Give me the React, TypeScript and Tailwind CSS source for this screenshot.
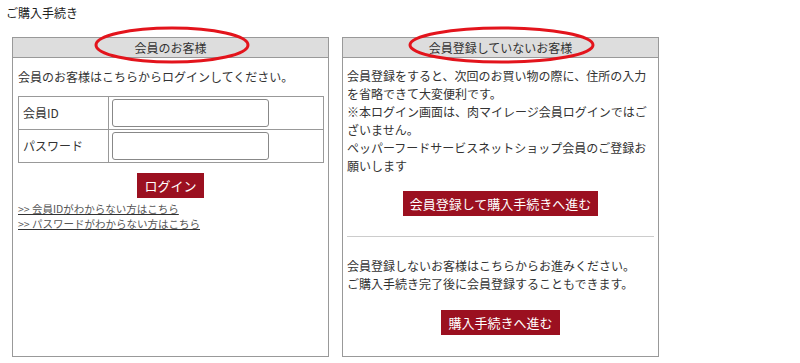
import React from 'react';

const font = { fontFamily: '"Noto Sans CJK JP", "Noto Sans", sans-serif' };

function Box({ title, children }: { title: string; children: React.ReactNode }) {
  return (
    <div className="w-[317px] h-[320px] border border-[#999] bg-white flex flex-col">
      <div className="h-[20px] bg-[#ddd] border-b border-[#999] text-center text-[12px] leading-[19px] text-[#333]">
        {title}
      </div>
      {children}
    </div>
  );
}

function RedButton({ label, w }: { label: string; w: string }) {
  return (
    <div className="flex justify-center">
      <button className={`${w} h-[25px] bg-[#9b1020] text-white text-[13px] leading-[25px] text-center`}>
        {label}
      </button>
    </div>
  );
}

export default function App() {
  return (
    <div className="relative w-[800px] h-[363px] bg-white text-[#333]" style={font}>
      {/* page title */}
      <div className="pl-[6px] pt-[5px] text-[12px] leading-[16px] text-[#222]">ご購入手続き</div>

      <div className="flex gap-[13px] pl-[12px] mt-[16px]">
        {/* members */}
        <Box title="会員のお客様">
          <div className="px-[5px] pt-[10px]">
            <p className="text-[12px] leading-[18px]">会員のお客様はこちらからログインしてください。</p>
            <table className="mt-[10px] w-[306px] border-collapse text-[12px]">
              <tbody>
                <tr className="h-[33px]">
                  <td className="w-[90px] border border-[#999] pl-[4px]">会員ID</td>
                  <td className="border border-[#999] pl-[3px]">
                    <input className="block w-[157px] h-[28px] border border-[#888] rounded-[3px] bg-white" />
                  </td>
                </tr>
                <tr className="h-[33px]">
                  <td className="w-[90px] border border-[#999] pl-[4px]">パスワード</td>
                  <td className="border border-[#999] pl-[3px]">
                    <input type="password" className="block w-[157px] h-[28px] border border-[#888] rounded-[3px] bg-white" />
                  </td>
                </tr>
              </tbody>
            </table>
            <div className="mt-[10px]">
              <RedButton label="ログイン" w="w-[67px]" />
            </div>
            <div className="mt-[3px] text-[10.5px] leading-[15px] text-[#555] flex flex-col items-start">
              <a className="underline decoration-[#333]">&gt;&gt; 会員IDがわからない方はこちら</a>
              <a className="underline decoration-[#333]">&gt;&gt; パスワードがわからない方はこちら</a>
            </div>
          </div>
        </Box>

        {/* guests */}
        <Box title="会員登録していないお客様">
          <div className="px-[4px] pt-[9px]">
            <p className="text-[12px] leading-[18px] whitespace-nowrap">
              会員登録をすると、次回のお買い物の際に、住所の入力<br />
              を省略できて大変便利です。<br />
              ※本ログイン画面は、肉マイレージ会員ログインではご<br />
              ざいません。<br />
              ペッパーフードサービスネットショップ会員のご登録お<br />
              願いします
            </p>
            <div className="mt-[16px]">
              <RedButton label="会員登録して購入手続きへ進む" w="w-[195px]" />
            </div>
            <div className="mt-[20px] border-t border-[#ccc]" />
            <p className="mt-[20px] text-[12px] leading-[18px] whitespace-nowrap">
              会員登録しないお客様はこちらからお進みください。<br />
              ご購入手続き完了後に会員登録することもできます。
            </p>
            <div className="mt-[17px]">
              <RedButton label="購入手続きへ進む" w="w-[119px]" />
            </div>
          </div>
        </Box>
      </div>

      {/* red annotation ellipses */}
      <svg className="absolute left-0 top-0 pointer-events-none" width="800" height="363">
        <ellipse cx="172" cy="45" rx="76" ry="17" fill="none" stroke="#e3141c" strokeWidth="3" />
        <ellipse cx="501.5" cy="45" rx="91.5" ry="17" fill="none" stroke="#e3141c" strokeWidth="3" />
      </svg>
    </div>
  );
}
